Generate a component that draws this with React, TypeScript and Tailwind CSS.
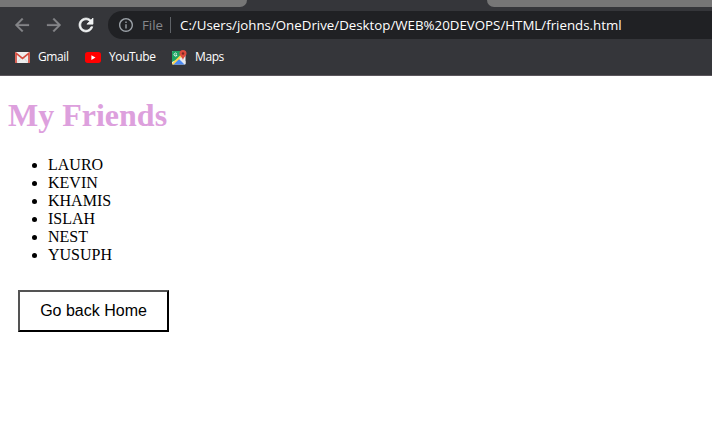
import React from "react";

const friends = ["LAURO", "KEVIN", "KHAMIS", "ISLAH", "NEST", "YUSUPH"];

function NavIcon({ d, className }: { d: string; className: string }) {
  return (
    <svg viewBox="4 4 16 16" className={`size-3.5 shrink-0 overflow-visible ${className}`} fill="currentColor" stroke="currentColor">
      <path d={d} />
    </svg>
  );
}

function InfoIcon() {
  return (
    <svg viewBox="2 2 20 20" className="size-3.5 shrink-0 text-[#9aa0a6]" fill="currentColor">
      <path d="M11 7h2v2h-2zm0 4h2v6h-2zm1-9C6.48 2 2 6.48 2 12s4.48 10 10 10 10-4.48 10-10S17.52 2 12 2zm0 18c-4.41 0-8-3.59-8-8s3.59-8 8-8 8 3.59 8 8-3.59 8-8 8z" />
    </svg>
  );
}

function GmailIcon() {
  return (
    <svg viewBox="0 0 15 11" className="h-[11px] w-[15px] shrink-0">
      <rect width="15" height="11" rx="1" fill="#eeeeee" />
      <path d="M2 10.8 6 6.2M13 10.8 9 6.2" stroke="#cccccc" strokeWidth=".7" />
      <path d="M1 11V1.2L7.5 6.3 14 1.2V11" fill="none" stroke="#d54b3d" strokeWidth="1.7" />
    </svg>
  );
}

function YouTubeIcon() {
  return (
    <svg viewBox="0 0 16 11" className="h-[11px] w-4 shrink-0">
      <rect width="16" height="11" rx="2.7" fill="#ff0000" />
      <path d="M6.4 3.2v4.7l4.1-2.35z" fill="#fff" />
    </svg>
  );
}

function MapsIcon() {
  return (
    <svg viewBox="0 0 15 15" className="size-[15px] shrink-0">
      <rect x="0" y="1" width="13.5" height="13.5" rx="1" fill="#eceff1" />
      <path d="M0 12V2q0-1 1-1h8l1 6z" fill="#1fa463" />
      <path d="M0 13.5 9 4.5l2 2.5-9.5 7.5H1q-1 0-1-1z" fill="#ffd54b" />
      <path d="m1.6 14.5 5.6-5.6 5.6 5.6z" fill="#4a89f3" />
      <path d="m7.2 8.9 2-2 4.3 4.3v2.4q0 .9-.7.9z" fill="#e8eaed" />
      <path d="M4.8 3.8A1.5 1.5 0 1 0 5 5H3.5" fill="none" stroke="#fff" strokeWidth=".8" />
      <path d="M11 0a3.5 3.5 0 0 0-3.5 3.5c0 2.4 2.8 3.4 3.5 6.5.7-3.1 3.5-4.1 3.5-6.5A3.5 3.5 0 0 0 11 0z" fill="#de4b3e" />
      <circle cx="11" cy="3.5" r="1.2" fill="#7d2a22" />
    </svg>
  );
}

export default function App() {
  return (
    <div className="flex h-[425px] w-[712px] flex-col overflow-hidden bg-white">
      <header className="flex h-[76px] shrink-0 flex-col border-b border-[#5b565c] bg-[#35363a] font-['Open_Sans',sans-serif] text-white">
        <div className="flex h-[7px] shrink-0 justify-between">
          <div className="w-[247px] rounded-br-[7px] bg-[#767676]" />
          <div className="w-[225px] rounded-bl-[7px] bg-[#767676]" />
        </div>
        <div className="mt-1 flex h-7 shrink-0 items-center pl-[15px]">
          <div className="flex w-[93px] shrink-0 gap-[18px]">
            <NavIcon className="stroke-[0.3] text-[#848588]" d="M20 11H7.83l5.59-5.59L12 4l-8 8 8 8 1.41-1.41L7.83 13H20v-2z" />
            <NavIcon className="stroke-[0.3] text-[#848588]" d="M12 4l-1.41 1.41L16.17 11H4v2h12.17l-5.58 5.59L12 20l8-8z" />
            <NavIcon className="stroke-[0.8] text-[#f1f3f4]" d="M17.65 6.35C16.2 4.9 14.21 4 12 4c-4.42 0-7.99 3.58-7.99 8s3.57 8 7.99 8c3.73 0 6.84-2.55 7.73-6h-2.08c-.82 2.33-3.04 4-5.65 4-3.31 0-6-2.69-6-6s2.69-6 6-6c1.66 0 3.14.69 4.22 1.78L13 11h7V4l-2.35 2.35z" />
          </div>
          <div className="flex h-7 flex-1 items-center rounded-l-full bg-[#202124] pl-[11px] text-[13.3px]">
            <InfoIcon />
            <span className="ml-[9px] w-7 pt-px text-[#85888c]">File</span>
            <span className="h-4 w-px bg-[#5f6368]" />
            <span className="ml-[9px] pt-px whitespace-nowrap">C:/Users/johns/OneDrive/Desktop/WEB%20DEVOPS/HTML/friends.html</span>
          </div>
        </div>
        <nav className="flex flex-1 items-center pl-[15px] text-xs tracking-[-0.4px]">
          <div className="flex w-[70px] items-center gap-2">
            <GmailIcon />
            <span>Gmail</span>
          </div>
          <div className="flex w-[87px] items-center gap-2">
            <YouTubeIcon />
            <span>YouTube</span>
          </div>
          <div className="flex items-center gap-2">
            <MapsIcon />
            <span>Maps</span>
          </div>
        </nav>
      </header>
      <main className="px-2 pt-[21px] font-['Liberation_Serif',serif] text-black">
        <h1 className="text-[32px] leading-[37px] font-bold text-[#dda0dd]">My Friends</h1>
        <ul className="mt-[22px] list-disc pl-10 text-base leading-[18px]">
          {friends.map((name) => (
            <li key={name}>{name}</li>
          ))}
        </ul>
        <button className="mt-[26px] ml-2.5 h-[42px] w-[151px] border-2 border-t-[#545454] border-r-black border-b-black border-l-[#545454] bg-white font-['Liberation_Sans',sans-serif] text-base">
          Go back Home
        </button>
      </main>
    </div>
  );
}
